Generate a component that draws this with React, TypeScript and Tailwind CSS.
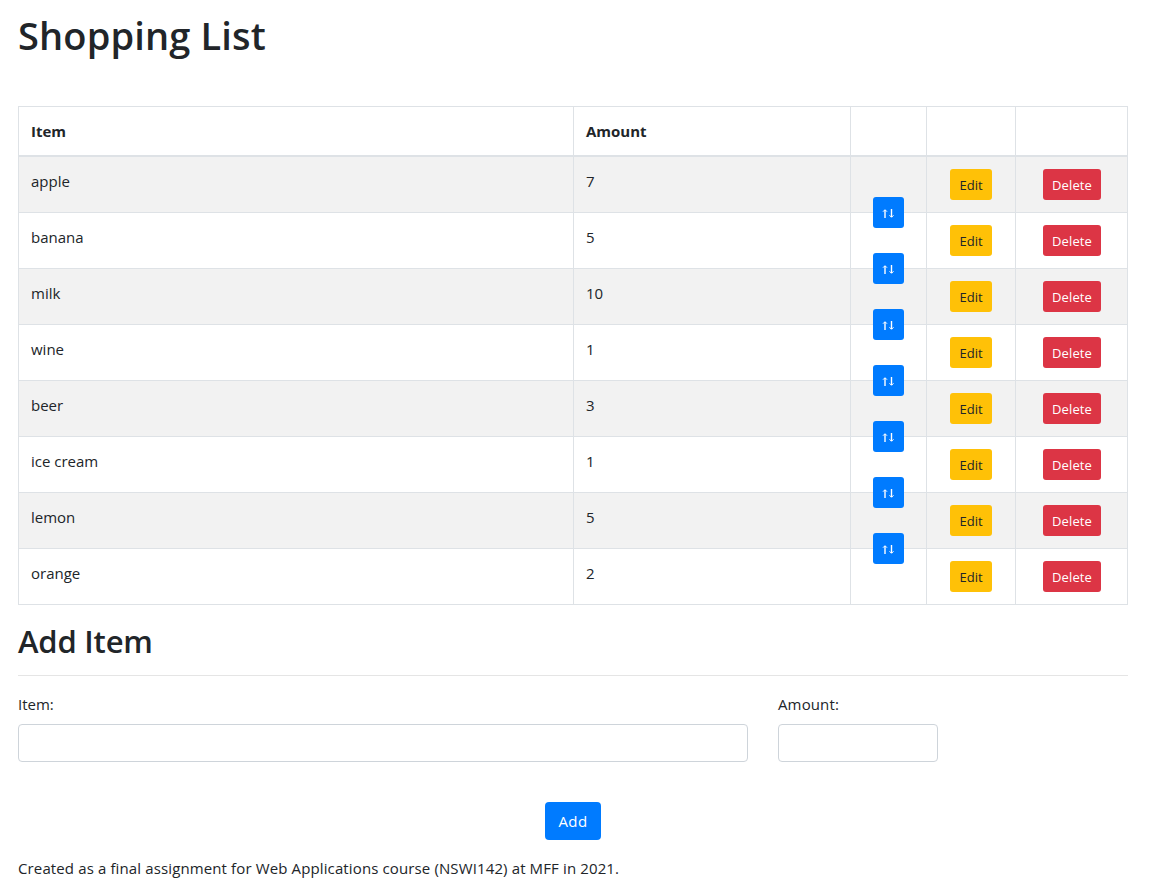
import { useState } from "react";

type Entry = { name: string; amount: number };

const initialEntries: Entry[] = [
  { name: "apple", amount: 7 },
  { name: "banana", amount: 5 },
  { name: "milk", amount: 10 },
  { name: "wine", amount: 1 },
  { name: "beer", amount: 3 },
  { name: "ice cream", amount: 1 },
  { name: "lemon", amount: 5 },
  { name: "orange", amount: 2 },
];

const columns = "grid grid-cols-[555px_277px_76px_89px_112px]";
const cell = "border-r border-[#dee2e6]";

function SwapIcon() {
  return (
    <svg width="13" height="9" viewBox="0 0 13 9" fill="none" stroke="currentColor">
      <path d="M3 9V1" strokeWidth="1.4" />
      <path d="M1 2.7L3 0.7L5 2.7" strokeWidth="1" />
      <path d="M9.5 0V8" strokeWidth="1.4" />
      <path d="M7.5 6.3L9.5 8.3L11.5 6.3" strokeWidth="1" />
    </svg>
  );
}

export default function App() {
  const [entries, setEntries] = useState(initialEntries);

  const swap = (i: number) => {
    const next = [...entries];
    [next[i], next[i + 1]] = [next[i + 1], next[i]];
    setEntries(next);
  };

  return (
    <div className="h-[890px] overflow-hidden bg-white pt-3 pl-[18px] font-['Open_Sans',sans-serif] text-[15px] leading-6 text-[#212529]">
      <main className="w-[1110px]">
        <h1 className="-mt-px text-[38px] leading-[48px] font-semibold tracking-[0.15px]">Shopping List</h1>

        <div className="mt-[47px] border-t border-l border-[#dee2e6]">
          <div className={`${columns} h-[50px] border-b-2 border-[#dee2e6] font-bold`}>
            <div className={`${cell} p-3`}>Item</div>
            <div className={`${cell} p-3`}>Amount</div>
            <div className={cell} />
            <div className={cell} />
            <div className={cell} />
          </div>
          {entries.map((entry, i) => (
            <div key={entry.name} className={`${columns} h-14 border-b border-[#dee2e6] ${i % 2 === 0 ? "bg-[#f2f2f2]" : "bg-white"}`}>
              <div className={`${cell} p-3`}>{entry.name}</div>
              <div className={`${cell} p-3`}>{entry.amount}</div>
              <div className={`${cell} relative`}>
                {i < entries.length - 1 && (
                  <button
                    onClick={() => swap(i)}
                    className="absolute top-10 left-[22px] z-10 flex size-[31px] items-center justify-center rounded-[3px] bg-[#007bff] pt-0.5 text-white"
                  >
                    <SwapIcon />
                  </button>
                )}
              </div>
              <div className={`${cell} pt-3 pl-[23px]`}>
                <button className="flex h-[31px] w-[42px] items-center justify-center rounded-[3px] bg-[#ffc107] text-[13px]">Edit</button>
              </div>
              <div className={`${cell} pt-3 pl-[27px]`}>
                <button className="flex h-[31px] w-[58px] items-center justify-center rounded-[3px] bg-[#dc3545] text-[13px] tracking-[0.1px] text-white">Delete</button>
              </div>
            </div>
          ))}
        </div>

        <h2 className="mt-[17px] text-[31px] leading-[38px] font-semibold tracking-[-0.2px]">Add Item</h2>
        <hr className="mt-[15px] border-t border-[#e5e5e5]" />

        <form className="mt-4" onSubmit={(e) => e.preventDefault()}>
          <div className="flex gap-[30px]">
            <label className="flex w-[730px] flex-col gap-2">
              <span>Item:</span>
              <input className="h-[38px] rounded border border-[#ced4da] px-3" />
            </label>
            <label className="flex w-40 flex-col gap-2">
              <span className="tracking-[0.13px]">Amount:</span>
              <input className="h-[38px] rounded border border-[#ced4da] px-3" />
            </label>
          </div>
          <div className="mt-10 flex justify-center">
            <button className="h-[38px] w-14 rounded bg-[#007bff] text-white tracking-[0.4px]">Add</button>
          </div>
        </form>

        <footer className="mt-4 tracking-[0.125px]">Created as a final assignment for Web Applications course (NSWI142) at MFF in 2021.</footer>
      </main>
    </div>
  );
}
